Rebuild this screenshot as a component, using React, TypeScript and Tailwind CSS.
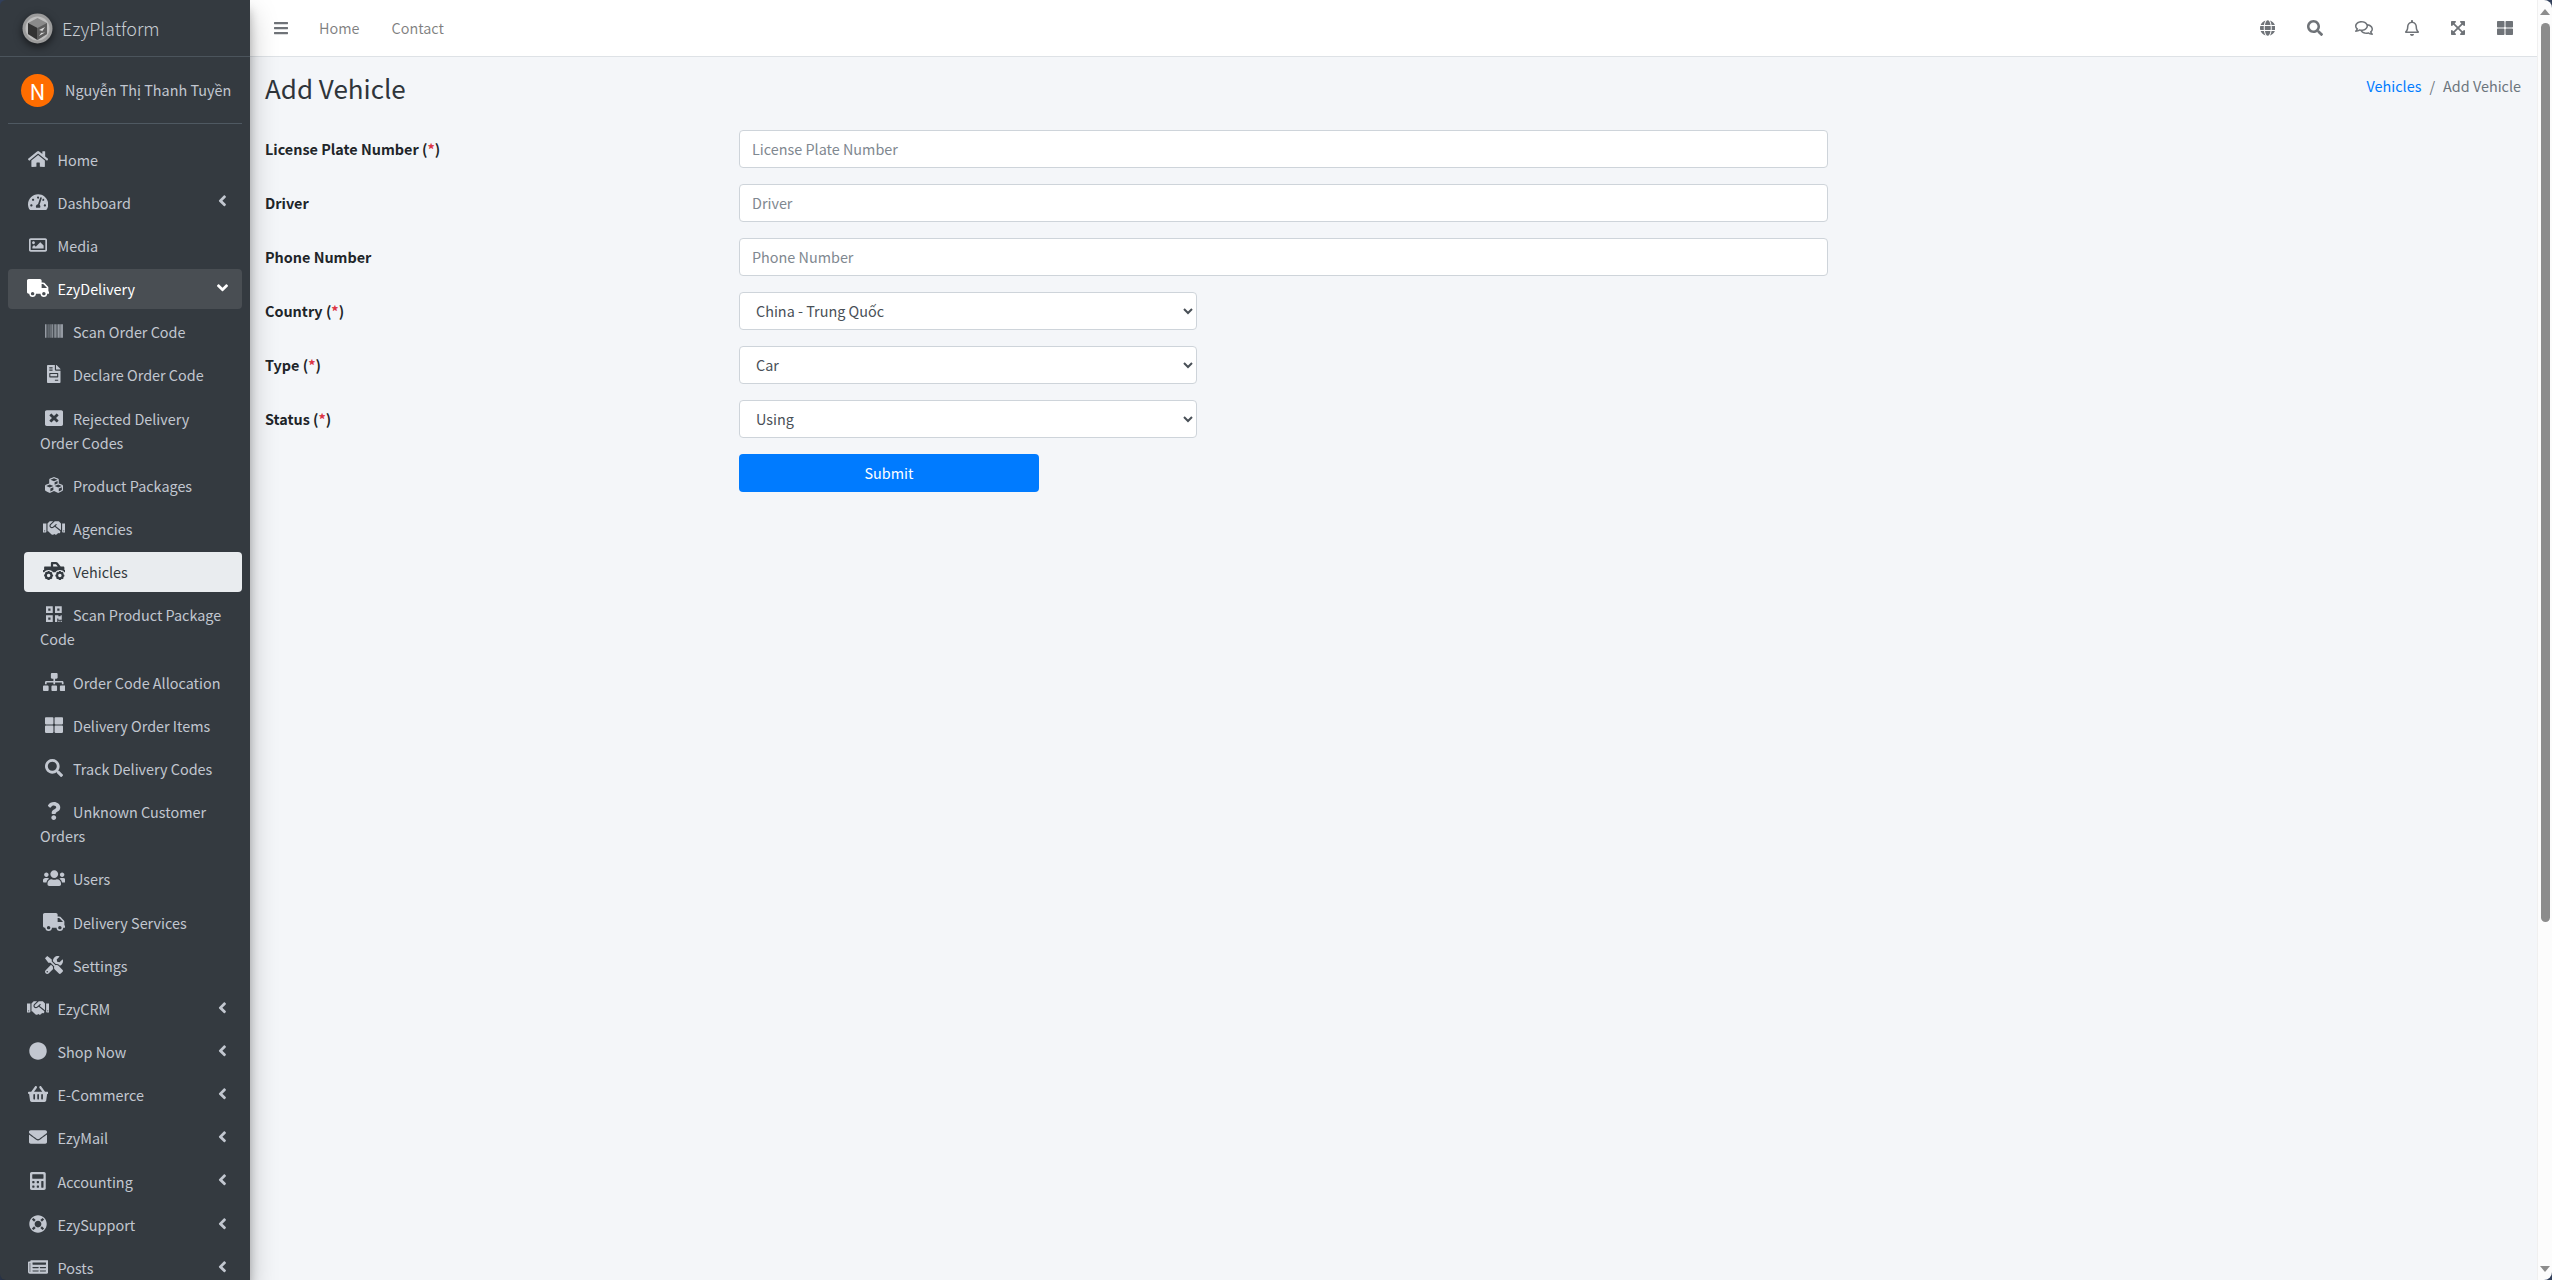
import { ReactNode } from 'react';
import { IconType } from 'react-icons';
import {
  FaAngleDown, FaAngleLeft, FaBarcode, FaBars, FaCalculator, FaCircle, FaCubes, FaEnvelope, FaExpandArrowsAlt,
  FaFileInvoice, FaGlobe, FaHandshake, FaHome, FaLifeRing, FaNewspaper, FaQrcode, FaQuestion, FaSearch,
  FaShoppingBasket, FaSitemap, FaTachometerAlt, FaThLarge, FaTools, FaTruck, FaTruckMonster, FaUsers, FaWindowClose,
  FaRegBell, FaRegComments, FaRegImage,
} from 'react-icons/fa';

const font = "font-['Noto_Sans_CJK_JP','Noto_Sans',sans-serif]";

// react-icons squeezes the glyph into a 1em square, so each icon gets its real width
type Item = { label: string; icon: IconType; size: string; arrow?: boolean };

const topItemsBefore: Item[] = [
  { label: 'Home', icon: FaHome, size: 'w-[20.25px]' },
  { label: 'Dashboard', icon: FaTachometerAlt, size: 'w-[20.25px]', arrow: true },
  { label: 'Media', icon: FaRegImage, size: 'w-[18px]' },
];

const subItemsBefore: Item[] = [
  { label: 'Scan Order Code', icon: FaBarcode, size: 'w-[18px]' },
  { label: 'Declare Order Code', icon: FaFileInvoice, size: 'w-[13.5px]' },
  { label: 'Rejected Delivery Order Codes', icon: FaWindowClose, size: 'w-[18px]' },
  { label: 'Product Packages', icon: FaCubes, size: 'w-[18px]' },
  { label: 'Agencies', icon: FaHandshake, size: 'w-[22.5px]' },
];

const subItemsAfter: Item[] = [
  { label: 'Scan Product Package Code', icon: FaQrcode, size: 'w-[15.75px]' },
  { label: 'Order Code Allocation', icon: FaSitemap, size: 'w-[22.5px]' },
  { label: 'Delivery Order Items', icon: FaThLarge, size: 'w-[18px]' },
  { label: 'Track Delivery Codes', icon: FaSearch, size: 'w-[18px]' },
  { label: 'Unknown Customer Orders', icon: FaQuestion, size: 'w-[13.5px]' },
  { label: 'Users', icon: FaUsers, size: 'w-[22.5px]' },
  { label: 'Delivery Services', icon: FaTruck, size: 'w-[22.5px]' },
  { label: 'Settings', icon: FaTools, size: 'w-[18px]' },
];

const topItemsAfter: Item[] = [
  { label: 'EzyCRM', icon: FaHandshake, size: 'w-[22.5px]', arrow: true },
  { label: 'Shop Now', icon: FaCircle, size: 'w-[18px]', arrow: true },
  { label: 'E-Commerce', icon: FaShoppingBasket, size: 'w-[20.25px]', arrow: true },
  { label: 'EzyMail', icon: FaEnvelope, size: 'w-[18px]', arrow: true },
  { label: 'Accounting', icon: FaCalculator, size: 'w-[15.75px]', arrow: true },
  { label: 'EzySupport', icon: FaLifeRing, size: 'w-[18px]', arrow: true },
  { label: 'Posts', icon: FaNewspaper, size: 'w-[20.25px]', arrow: true },
];

function TopLink({ item }: { item: Item }) {
  const Icon = item.icon;
  return (
    <li className="mb-[3.2px] shrink-0">
      <a className="flex items-center h-10 pl-4 pr-[15px] rounded text-[#c2c7d0]">
        <span className="w-[28px] mr-[5.5px] flex justify-center shrink-0 -mt-[2px]">
          <Icon className={`h-[18px] shrink-0 ${item.size}`} />
        </span>
        <span className="flex-1 leading-6">{item.label}</span>
        {item.arrow && <FaAngleLeft className="h-[17.6px] w-[8.8px] mt-[-3px]" />}
      </a>
    </li>
  );
}

function SubLink({ item, active }: { item: Item; active?: boolean }) {
  const Icon = item.icon;
  return (
    <li className="mb-[3.2px] ml-4">
      <a className={`block py-2 pl-4 pr-5 rounded leading-6 ${active ? 'bg-[#e9ecef] text-[#343a40]' : 'text-[#c2c7d0]'}`}>
        <span className="inline-flex w-[28px] mr-[5px] justify-center align-[-2px]">
          <Icon className={`h-[18px] shrink-0 ${item.size}`} />
        </span>
        {item.label}
      </a>
    </li>
  );
}

function Sidebar() {
  return (
    <aside className="w-[250px] h-screen shrink-0 rounded-l-[6px] bg-[#343a40] overflow-hidden flex flex-col shadow-[0_14px_28px_rgba(0,0,0,0.25),0_10px_10px_rgba(0,0,0,0.22)] z-10">
      <div className="h-[57px] shrink-0 flex items-center pl-[22px] border-b border-[#4b545c]">
        <svg width="31" height="31" viewBox="0 0 31 31" className="shrink-0 drop-shadow-[0_3px_4px_rgba(0,0,0,0.6)]">
          <circle cx="15.5" cy="15.5" r="15" fill="#9b9b9b" />
          <circle cx="15.5" cy="15.5" r="12" fill="#bdbdbd" />
          <path d="M15.5 5 L25 10 V21 L15.5 27 L6 21 V10 Z" fill="#8a8a8a" />
          <path d="M6 10 L15.5 15 V27 L6 21 Z" fill="#333333" />
          <path d="M15.5 15 L25 10 V21 L15.5 27 Z" fill="#5c5c5c" />
          <path d="M17 17 L23 14 L19 20 L23 19.5 L17 23 L20.5 18 Z" fill="#d8d8d8" />
        </svg>
        <span className="ml-[9px] text-[18px] font-light leading-none text-[#c7ccd3]">EzyPlatform</span>
      </div>
      <div className="mx-2 h-[67px] shrink-0 flex items-center border-b border-[#4f5962] pl-[13px]">
        <div className="w-[33px] h-[33px] rounded-full bg-[#ff6d00] text-white flex items-center justify-center text-[22px] shrink-0">N</div>
        <span className="ml-[11px] text-[14.4px] whitespace-nowrap text-[#c2c7d0]">Nguyễn Thị Thanh Tuyền</span>
      </div>
      <ul className="px-2 pt-[15.5px]">
        {topItemsBefore.map((item) => <TopLink key={item.label} item={item} />)}
        <li className="mb-[3.2px]">
          <a className="flex items-center h-10 pl-4 pr-[14px] rounded bg-[#494e53] text-white">
            <span className="w-[28px] mr-[5.5px] flex justify-center shrink-0 -mt-[2px]">
              <FaTruck className="h-[18px] w-[22.5px] shrink-0" />
            </span>
            <span className="flex-1 leading-6">EzyDelivery</span>
            <FaAngleDown className="h-[17.6px] w-[11px] mt-[-3px]" />
          </a>
        </li>
        {subItemsBefore.map((item) => <SubLink key={item.label} item={item} />)}
        <SubLink item={{ label: 'Vehicles', icon: FaTruckMonster, size: 'w-[22.5px]' }} active />
        {subItemsAfter.map((item) => <SubLink key={item.label} item={item} />)}
        {topItemsAfter.map((item) => <TopLink key={item.label} item={item} />)}
      </ul>
    </aside>
  );
}

function NavIcon({ children }: { children: ReactNode }) {
  return <a className="px-4 flex justify-center text-[#6f7378]">{children}</a>;
}

function Navbar() {
  return (
    <nav className="h-[57px] shrink-0 bg-white border-b border-[#dee2e6] flex items-center pl-[24px] pr-[8px]">
      <FaBars className="h-4 w-[14px] text-[#6f7378]" />
      <a className="ml-[31px] pb-[1px] text-[rgba(0,0,0,0.5)]">Home</a>
      <a className="ml-[32px] pb-[1px] text-[rgba(0,0,0,0.5)]">Contact</a>
      <div className="ml-auto flex items-center">
        <NavIcon><FaGlobe className="h-4 w-[15.5px]" /></NavIcon>
        <NavIcon><FaSearch className="h-4 w-4" /></NavIcon>
        <NavIcon><FaRegComments className="h-4 w-[18px]" /></NavIcon>
        <NavIcon><FaRegBell className="h-4 w-[14px]" /></NavIcon>
        <NavIcon><FaExpandArrowsAlt className="h-4 w-[14px]" /></NavIcon>
        <NavIcon><FaThLarge className="h-4 w-4" /></NavIcon>
      </div>
    </nav>
  );
}

function Required() {
  return <>(<span className="text-[#dc3545]">*</span>)</>;
}

function Row({ label, children }: { label: ReactNode; children: ReactNode }) {
  return (
    <div className="flex items-center mb-4 h-[38px]">
      <label className="w-[474px] shrink-0 font-bold text-[#212529] pr-2">{label}</label>
      {children}
    </div>
  );
}

const inputClass = 'w-[1089px] h-[38px] px-3 pb-[2px] bg-white border border-[#ced4da] rounded text-[#495057] placeholder:text-[#7f8890] outline-none';
const selectClass = 'w-[458px] h-[38px] pl-3 pr-1 pb-[2px] bg-white border border-[#ced4da] rounded text-[#495057] outline-none';

function Content() {
  return (
    <main className="flex-1 min-h-0 overflow-hidden bg-[#f4f6f9] px-[15px]">
      <div className="flex justify-between pt-[14px] h-[72px]">
        <h1 className="text-[26px] leading-[33.6px] text-[#2f353b]">Add Vehicle</h1>
        <div className="leading-6 mt-[3px] mr-[1px]">
          <a className="text-[#007bff]">Vehicles</a>
          <span className="text-[#6c757d] px-2">/</span>
          <span className="text-[#6c757d]">Add Vehicle</span>
        </div>
      </div>
      <form className="pt-[1px]">
        <Row label={<>License Plate Number <Required /></>}>
          <input className={inputClass} placeholder="License Plate Number" />
        </Row>
        <Row label="Driver"><input className={inputClass} placeholder="Driver" /></Row>
        <Row label="Phone Number"><input className={inputClass} placeholder="Phone Number" /></Row>
        <Row label={<>Country <Required /></>}>
          <select className={selectClass} defaultValue="cn">
            <option value="cn">China - Trung Quốc</option>
          </select>
        </Row>
        <Row label={<>Type <Required /></>}>
          <select className={selectClass} defaultValue="car">
            <option value="car">Car</option>
          </select>
        </Row>
        <Row label={<>Status <Required /></>}>
          <select className={selectClass} defaultValue="using">
            <option value="using">Using</option>
          </select>
        </Row>
        <div className="pl-[474px]">
          <button type="button" className="w-[300px] h-[38px] pb-[1px] bg-[#007bff] text-white rounded">Submit</button>
        </div>
      </form>
    </main>
  );
}

function Scrollbar() {
  return (
    <div className="w-[15px] shrink-0 bg-[#fcfcfc] border-l border-[#f0f0f0] rounded-r-[8px] flex flex-col items-center">
      <div className="h-[23px] pt-[9px] shrink-0">
        <div className="w-0 h-0 border-x-[5px] border-x-transparent border-b-[6px] border-b-[#8c8c8c]" />
      </div>
      <div className="w-[9px] h-[899px] rounded-full bg-[#8c8c8c]" />
      <div className="mt-auto mb-[8px] w-0 h-0 border-x-[5px] border-x-transparent border-t-[6px] border-t-[#8c8c8c]" />
    </div>
  );
}

export default function App() {
  return (
    <div className={`${font} h-screen w-full flex overflow-hidden bg-[#33415c] text-[14.4px] leading-6`}>
      <Sidebar />
      <div className="flex-1 min-w-0 flex flex-col">
        <Navbar />
        <Content />
      </div>
      <Scrollbar />
    </div>
  );
}
